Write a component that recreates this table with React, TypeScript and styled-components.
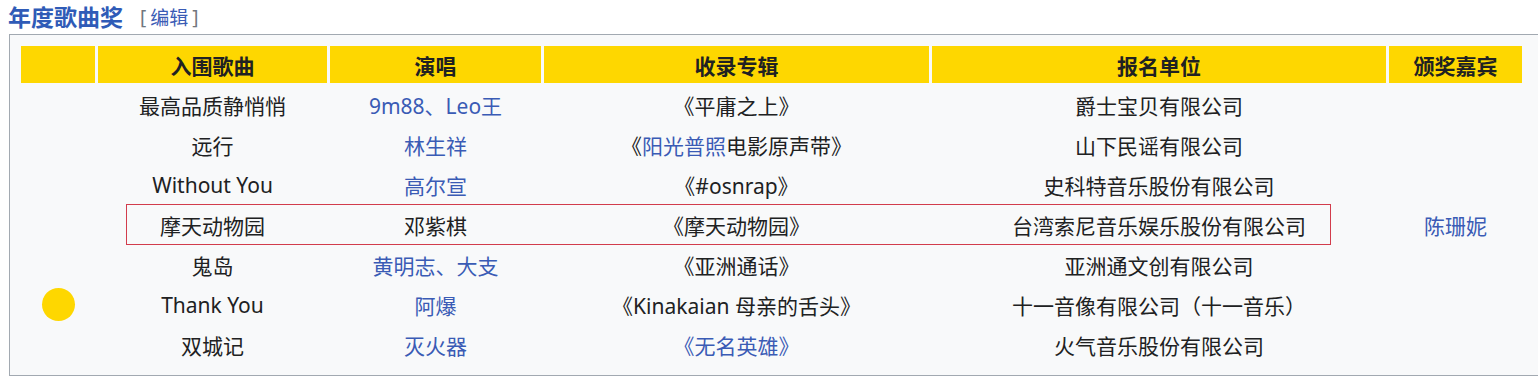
import styled, { createGlobalStyle } from 'styled-components'

const GlobalStyle = createGlobalStyle`
    body {
        margin: 0;
        overflow: hidden;
        background: #ffffff;
        font-family: 'Noto Sans', 'Noto Sans CJK SC', sans-serif;
        color: #202122;
    }
`

type Part = { text: string; link?: boolean }

type Row = {
    song: string
    singer: Part[]
    album: Part[]
    company: string
    dot?: boolean
}

const rows: Row[] = [
    {
        song: '最高品质静悄悄',
        singer: [{ text: '9m88、Leo王', link: true }],
        album: [{ text: '《平庸之上》' }],
        company: '爵士宝贝有限公司',
    },
    {
        song: '远行',
        singer: [{ text: '林生祥', link: true }],
        album: [{ text: '《' }, { text: '阳光普照', link: true }, { text: '电影原声带》' }],
        company: '山下民谣有限公司',
    },
    {
        song: 'Without You',
        singer: [{ text: '高尔宣', link: true }],
        album: [{ text: '《#osnrap》' }],
        company: '史科特音乐股份有限公司',
    },
    {
        song: '摩天动物园',
        singer: [{ text: '邓紫棋' }],
        album: [{ text: '《摩天动物园》' }],
        company: '台湾索尼音乐娱乐股份有限公司',
    },
    {
        song: '鬼岛',
        singer: [{ text: '黄明志、大支', link: true }],
        album: [{ text: '《亚洲通话》' }],
        company: '亚洲通文创有限公司',
    },
    {
        song: 'Thank You',
        singer: [{ text: '阿爆', link: true }],
        album: [{ text: '《Kinakaian 母亲的舌头》' }],
        company: '十一音像有限公司（十一音乐）',
        dot: true,
    },
    {
        song: '双城记',
        singer: [{ text: '灭火器', link: true }],
        album: [{ text: '《无名英雄》', link: true }],
        company: '火气音乐股份有限公司',
    },
]

// column widths measured off the header cells
const columns = [
    { title: '', width: 74 },
    { title: '入围歌曲', width: 229 },
    { title: '演唱', width: 211 },
    { title: '收录专辑', width: 385 },
    { title: '报名单位', width: 454 },
    { title: '颁奖嘉宾', width: 133 },
]

const renderParts = (parts: Part[]) =>
    parts.map((p, j) => (p.link ? <LinkText key={j}>{p.text}</LinkText> : <span key={j}>{p.text}</span>))

export default function App(): JSX.Element {
    return (
        <>
            <GlobalStyle />
            <Page>
                <Heading>
                    <Title>年度歌曲奖</Title>
                    <EditLink>
                        <Bracket>[</Bracket>
                        <LinkText>编辑</LinkText>
                        <Bracket>]</Bracket>
                    </EditLink>
                </Heading>
                <Box>
                    <Table>
                        <colgroup>
                            {columns.map((c, i) => (
                                <col key={i} style={{ width: c.width }} />
                            ))}
                        </colgroup>
                        <thead>
                            <tr>
                                {columns.map((c, i) => (
                                    <HeadCell key={i}>{c.title}</HeadCell>
                                ))}
                            </tr>
                        </thead>
                        <tbody>
                            {rows.map((row, i) => (
                                <tr key={i}>
                                    <Cell>{row.dot && <Dot />}</Cell>
                                    <Cell>{row.song}</Cell>
                                    <Cell>{renderParts(row.singer)}</Cell>
                                    <Cell>{renderParts(row.album)}</Cell>
                                    <Cell>{row.company}</Cell>
                                    {i === 0 && (
                                        <Cell rowSpan={rows.length}>
                                            <LinkText>陈珊妮</LinkText>
                                        </Cell>
                                    )}
                                </tr>
                            ))}
                        </tbody>
                    </Table>
                    <Highlight />
                </Box>
            </Page>
        </>
    )
}

const Page = styled.div`
    padding: 0 0 0 9px;
`

const Heading = styled.div`
    display: flex;
    align-items: center;
    height: 34px;
`

const Title = styled.h2`
    margin: 0 0 0 -1px;
    font-size: 23px;
    font-weight: 700;
    color: #2f5bb7;
    line-height: 34px;
`

const EditLink = styled.span`
    margin-left: 17px;
    font-size: 19px;
    display: flex;
    gap: 4px;
    align-items: center;
`

const Bracket = styled.span`
    color: #72777d;
`

const LinkText = styled.span`
    color: #3a5bb5;
`

const Box = styled.div`
    position: relative;
    width: 1560px;
    box-sizing: border-box;
    border: 1px solid #a2a9b1;
    background: #f8f9fa;
    padding: 8px 0 9px 8px;
`

const Table = styled.table`
    table-layout: fixed;
    width: 1507px;
    border-collapse: separate;
    border-spacing: 3px;
`

const HeadCell = styled.th`
    background: #fed700;
    height: 37px;
    padding: 0;
    font-size: 21px;
    font-weight: 700;
    color: #202122;
    text-align: center;
    vertical-align: middle;
`

const Cell = styled.td`
    height: 37px;
    padding: 0;
    font-size: 21px;
    color: #202122;
    text-align: center;
    vertical-align: middle;
    white-space: nowrap;
`

const Dot = styled.span`
    display: inline-block;
    width: 33px;
    height: 33px;
    border-radius: 50%;
    background: #fed700;
    vertical-align: middle;
`

const Highlight = styled.div`
    position: absolute;
    left: 116px;
    top: 169px;
    width: 1203px;
    height: 39px;
    border: 1px solid #d23c4c;
    pointer-events: none;
`
